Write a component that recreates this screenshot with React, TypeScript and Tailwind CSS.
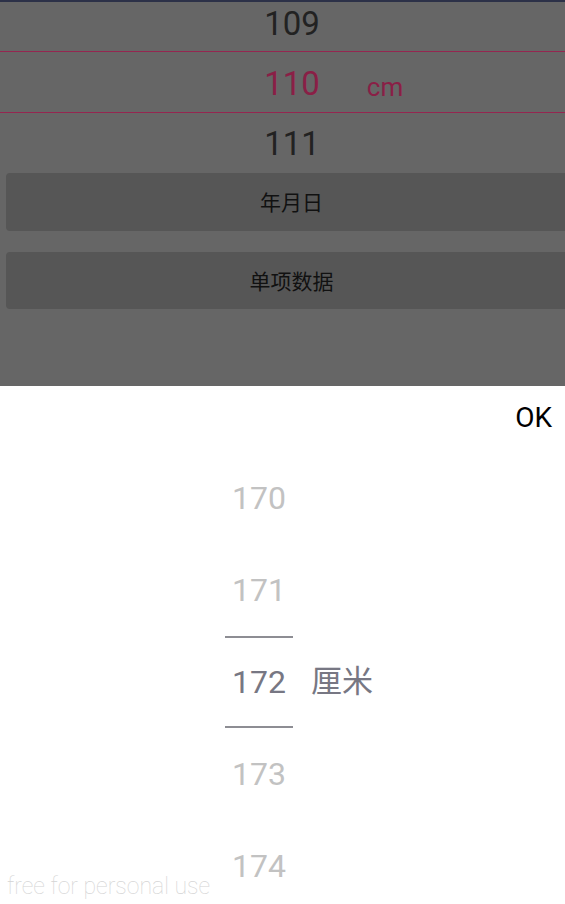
const pickerRows = ["170", "171", "172", "173", "174"];

function Divider() {
  return <div className="h-[1px] w-full bg-[#952650]" />;
}

export default function App() {
  return (
    <main
      className="relative h-[904px] w-[565px] overflow-hidden bg-white"
      style={{ fontFamily: "Roboto, 'Noto Sans CJK SC', sans-serif" }}
    >
      {/* dimmed page behind the sheet */}
      <section className="h-[386px] bg-[#666666] border-t-[2px] border-[#2c3148]">
        <div className="flex flex-col">
          <div className="grid h-[49px] grid-cols-[1fr_auto_1fr] items-center pl-[19px] pb-[7px]">
            <span />
            <span className="text-[33px] leading-none text-[#222222]">109</span>
            <span />
          </div>
          <Divider />
          <div className="grid h-[60px] grid-cols-[1fr_auto_1fr] items-center pl-[19px] pt-[3px]">
            <span />
            <span className="text-[33px] leading-none text-[#8a1f46]">110</span>
            <span className="ml-[47px] mt-[6px] text-[26px] leading-none text-[#8a1f46]">cm</span>
          </div>
          <Divider />
          <div className="grid h-[60px] grid-cols-[1fr_auto_1fr] items-center pl-[19px]">
            <span />
            <span className="text-[33px] leading-none text-[#222222]">111</span>
            <span />
          </div>
        </div>
        <div className="ml-[6px] mr-[-8px] flex flex-col gap-[21px]">
          <button className="h-[58px] rounded-[4px] bg-[#565656] pl-[4px] pt-[4px] text-[21px] text-[#111111]">
            年月日
          </button>
          <button className="h-[57px] rounded-[4px] bg-[#565656] pl-[4px] pt-[4px] text-[21px] text-[#111111]">
            单项数据
          </button>
        </div>
      </section>

      {/* bottom sheet picker */}
      <section className="flex flex-col">
        <div className="flex h-[66px] items-center justify-end pr-[13px] pb-[2px]">
          <span className="text-[28px] leading-none text-black">OK</span>
        </div>
        <div className="flex items-center">
          <div className="ml-[225px] flex w-[68px] flex-col">
            {pickerRows.map(n => (
              <div
                key={n}
                className={
                  n === "172"
                    ? "flex h-[92px] items-center justify-center border-y-[2px] border-[#8d8d93] text-[32px] text-[#777783]"
                    : "flex h-[92px] items-center justify-center text-[32px] text-[#c2c2c2]"
                }
              >
                {n}
              </div>
            ))}
          </div>
          <span className="ml-[18px] mb-[2px] text-[31px] leading-none text-[#777783]">厘米</span>
        </div>
      </section>

      <span className="absolute bottom-0 left-[7px] text-[23px] font-thin text-[#d4d4d4]">
        free for personal use
      </span>
    </main>
  );
}
